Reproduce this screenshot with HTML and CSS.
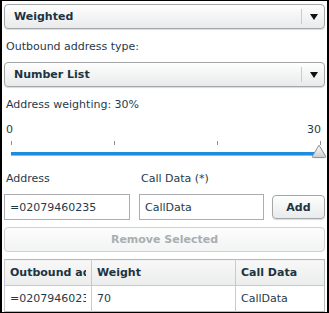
FILE: index.html
```html
<!DOCTYPE html>
<html lang="en">
<head>
  <meta charset="UTF-8">
  <title>Outbound Address</title>
  <link rel="stylesheet" href="styles.css">
</head>
<body>
  <div class="panel">
    <div class="select">
      <span class="select-text">Weighted</span>
      <span class="select-btn"><span class="arrow"></span></span>
    </div>

    <div class="label">Outbound address type:</div>

    <div class="select">
      <span class="select-text">Number List</span>
      <span class="select-btn"><span class="arrow"></span></span>
    </div>

    <div class="label">Address weighting: 30%</div>

    <div class="slider">
      <div class="scale">
        <span>0</span>
        <span>30</span>
      </div>
      <div class="ticks">
        <span></span><span></span><span></span><span></span>
      </div>
      <div class="track">
        <svg class="thumb" width="16" height="15" viewBox="0 0 16 15">
          <defs>
            <linearGradient id="thumbFill" x1="0" y1="0" x2="0" y2="1">
              <stop offset="0" stop-color="#ffffff"/>
              <stop offset="1" stop-color="#c9cccf"/>
            </linearGradient>
          </defs>
          <path d="M8 1.2 L14.6 12.2 Q15 13.6 13.6 13.6 L2.4 13.6 Q1 13.6 1.4 12.2 Z" fill="url(#thumbFill)" stroke="#8a8f94" stroke-width="1"/>
        </svg>
      </div>
    </div>

    <div class="fields">
      <div class="field field-address">
        <div class="label">Address</div>
        <input type="text" value="=02079460235">
      </div>
      <div class="field field-data">
        <div class="label">Call Data (*)</div>
        <input type="text" value="CallData">
      </div>
      <button class="btn btn-add">Add</button>
    </div>

    <button class="btn btn-wide" disabled>Remove Selected</button>

    <table class="grid">
      <thead>
        <tr>
          <th class="col-addr"><div class="clip">Outbound address</div></th>
          <th class="col-weight">Weight</th>
          <th class="col-data">Call Data</th>
        </tr>
      </thead>
      <tbody>
        <tr>
          <td><div class="clip">=02079460235</div></td>
          <td>70</td>
          <td>CallData</td>
        </tr>
      </tbody>
    </table>
  </div>
</body>
</html>
```

FILE: styles.css
```css
html, body {
  margin: 0;
  padding: 0;
  background: #ffffff;
}
body {
  font-family: "DejaVu Sans", Verdana, sans-serif;
  font-size: 11px;
  color: #1f3b4b;
}
.panel {
  box-sizing: border-box;
  width: 329px;
  height: 313px;
  border: 1px solid #000000;
  border-left-width: 2px;
  border-right-width: 2px;
  padding: 3px 2px 0 2px;
  overflow: hidden;
}
.select {
  display: flex;
  align-items: center;
  height: 25px;
  box-sizing: border-box;
  border: 1px solid #a4a7aa;
  border-radius: 4px;
  background: linear-gradient(#fefefe, #e9eaeb);
  box-shadow: 0 1px 1px rgba(0, 0, 0, 0.15);
}
.select-text {
  flex: 1;
  padding-left: 9px;
  font-weight: bold;
  color: #1c3442;
}
.select-btn {
  display: flex;
  align-items: center;
  justify-content: center;
  width: 22px;
  height: 15px;
  border-left: 1px solid #c9cbcd;
}
.arrow {
  width: 0;
  height: 0;
  border-left: 4px solid transparent;
  border-right: 4px solid transparent;
  border-top: 6px solid #111111;
  margin-left: 1px;
}
.label {
  padding: 11px 0 0 2px;
  height: 22px;
}
.slider {
  padding: 3px 0 0 0;
}
.scale {
  display: flex;
  justify-content: space-between;
  padding: 0 4px 0 2px;
  height: 16px;
}
.ticks {
  display: flex;
  justify-content: space-between;
  padding: 0 4px 0 7px;
  height: 11px;
  margin-top: 2px;
}
.ticks span {
  width: 1px;
  height: 4px;
  background: #8b8f92;
}
.track {
  position: relative;
  margin: 0 7px 0 7px;
  height: 3px;
  background: #1e8de0;
  border-bottom: 1px solid #7cc0f0;
}
.thumb {
  position: absolute;
  right: -9px;
  top: -8px;
}
.fields {
  display: flex;
  align-items: flex-end;
  margin-top: 10px;
}
.field .label {
  padding-top: 6px;
  height: 22px;
}
.field-address {
  width: 126px;
}
.field-data {
  width: 125px;
  margin-left: 9px;
}
.field input {
  box-sizing: border-box;
  width: 100%;
  height: 26px;
  border: 1px solid #abadb0;
  padding: 0 5px;
  font: inherit;
  color: #1f3b4b;
  background: #ffffff;
}
.btn {
  box-sizing: border-box;
  border: 1px solid #a4a7aa;
  border-radius: 4px;
  background: linear-gradient(#fefefe, #e9eaeb);
  box-shadow: 0 1px 1px rgba(0, 0, 0, 0.15);
  font: inherit;
  font-weight: bold;
  color: #1c3442;
}
.btn-add {
  width: 53px;
  height: 24px;
  margin-left: 8px;
  margin-bottom: 1px;
}
.btn-wide {
  display: block;
  width: 100%;
  height: 25px;
  margin-top: 7px;
  color: #a9aeb2;
  background: linear-gradient(#fdfdfd, #f2f3f3);
  border-color: #cfd1d3;
  box-shadow: none;
}
.grid {
  width: 100%;
  margin-top: 7px;
  border-collapse: collapse;
  table-layout: fixed;
  border: 1px solid #b6b9bc;
}
.grid th, .grid td {
  text-align: left;
  padding: 0 5px;
  border-left: 1px solid #c8cacc;
  white-space: nowrap;
  overflow: hidden;
}
.grid th {
  height: 25px;
  font-weight: bold;
  color: #1c3442;
  background: linear-gradient(#f8f8f8, #ebecec);
  border-bottom: 1px solid #c8cacc;
}
.grid td {
  height: 25px;
}
.clip {
  overflow: hidden;
  white-space: nowrap;
}
.col-addr {
  width: 76px;
}
.col-data {
  width: 78px;
}
```
